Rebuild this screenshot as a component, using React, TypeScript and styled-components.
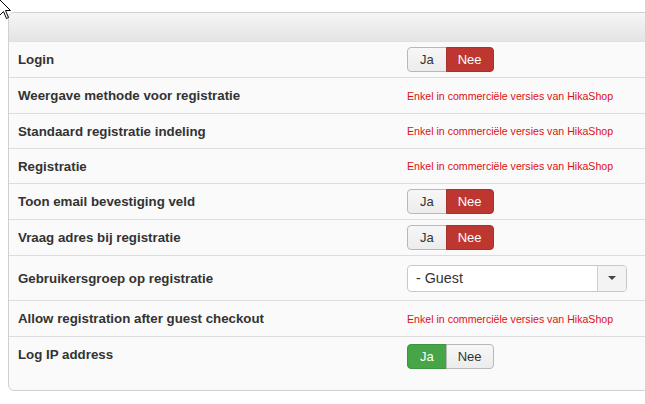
import React from "react";
import styled, { createGlobalStyle } from "styled-components";

const Global = createGlobalStyle`
  html, body { margin: 0; padding: 0; background: #fff; overflow: hidden; }
  body { font-family: "Liberation Sans", Arial, sans-serif; }
`;

const Page = styled.div`
  padding: 12px 0 0 8px;
  width: 645px;
  height: 404px;
  box-sizing: border-box;
  overflow: hidden;
`;

const Panel = styled.div`
  margin-right: -30px;
  border: 1px solid #d0d0d0;
  border-radius: 6px;
  background: #fafafa;
  overflow: hidden;
`;

const Header = styled.div`
  height: 28px;
  background: linear-gradient(#f6f6f6, #e4e4e4);
  border-bottom: 1px solid #e0e0e0;
`;

const Row = styled.div<{ $h: number; $first?: boolean; $top?: boolean }>`
  display: flex;
  align-items: ${(p) => (p.$top ? "flex-start" : "center")};
  height: ${(p) => p.$h}px;
  padding: 0 9px;
  border-top: ${(p) => (p.$first ? "none" : "1px solid #dddddd")};
  box-sizing: content-box;
`;

const Label = styled.div<{ $top?: boolean }>`
  width: 389px;
  flex: none;
  font-weight: bold;
  font-size: 13.3px;
  color: #333;
  ${(p) => (p.$top ? "margin-top: 10px;" : "")}
`;

const Note = styled.div`
  font-size: 10.6px;
  color: #dd1111;
`;

const Group = styled.div<{ $top?: boolean }>`
  display: flex;
  ${(p) => (p.$top ? "margin-top: 7px;" : "")}
`;

const Btn = styled.div<{ $tone?: "red" | "green"; $pos: "l" | "r" }>`
  height: 23px;
  line-height: 23px;
  padding: 0 ${(p) => (p.$pos === "l" ? 12 : 11)}px;
  font-size: 13px;
  border: 1px solid #b8b8b8;
  border-radius: ${(p) => (p.$pos === "l" ? "4px 0 0 4px" : "0 4px 4px 0")};
  ${(p) => (p.$pos === "r" ? "margin-left: -1px;" : "")}
  color: #333;
  background: linear-gradient(#f7f7f7, #ececec);
  ${(p) =>
    p.$tone === "red"
      ? "background: #bd362f; border-color: #a8312a; color: #fff;"
      : p.$tone === "green"
      ? "background: #46a546; border-color: #3e933e; color: #fff;"
      : ""}
`;

const Select = styled.div`
  display: flex;
  width: 218px;
  height: 25px;
  border: 1px solid #c8c8c8;
  border-radius: 4px;
  background: #fff;
  overflow: hidden;
`;

const SelectText = styled.div`
  flex: 1;
  padding-left: 8px;
  line-height: 25px;
  font-size: 14.3px;
  color: #333;
`;

const Arrow = styled.div`
  width: 28px;
  border-left: 1px solid #d0d0d0;
  background: #f3f3f3;
  display: flex;
  align-items: center;
  justify-content: center;
`;

const Caret = styled.div`
  width: 0;
  height: 0;
  border-left: 4px solid transparent;
  border-right: 4px solid transparent;
  border-top: 4px solid #444;
`;

const Cursor = styled.svg`
  position: absolute;
  left: -1px;
  top: -1px;
`;

const Toggle = ({ on, top }: { on: boolean; top?: boolean }) => (
  <Group $top={top}>
    <Btn $pos="l" $tone={on ? "green" : undefined}>Ja</Btn>
    <Btn $pos="r" $tone={on ? undefined : "red"}>Nee</Btn>
  </Group>
);

const NOTE = "Enkel in commerciële versies van HikaShop";

export default function App() {
  return (
    <>
      <Global />
      <Page>
        <Panel>
          <Header />
          <Row $h={35} $first>
            <Label>Login</Label>
            <Toggle on={false} />
          </Row>
          <Row $h={35}>
            <Label>Weergave methode voor registratie</Label>
            <Note>{NOTE}</Note>
          </Row>
          <Row $h={34}>
            <Label>Standaard registratie indeling</Label>
            <Note>{NOTE}</Note>
          </Row>
          <Row $h={34}>
            <Label>Registratie</Label>
            <Note>{NOTE}</Note>
          </Row>
          <Row $h={35}>
            <Label>Toon email bevestiging veld</Label>
            <Toggle on={false} />
          </Row>
          <Row $h={35}>
            <Label>Vraag adres bij registratie</Label>
            <Toggle on={false} />
          </Row>
          <Row $h={44}>
            <Label>Gebruikersgroep op registratie</Label>
            <Select>
              <SelectText>- Guest</SelectText>
              <Arrow>
                <Caret />
              </Arrow>
            </Select>
          </Row>
          <Row $h={35}>
            <Label>Allow registration after guest checkout</Label>
            <Note>{NOTE}</Note>
          </Row>
          <Row $h={53} $top>
            <Label $top>Log IP address</Label>
            <Toggle on top />
          </Row>
        </Panel>
      </Page>
      <Cursor width="20" height="22" viewBox="0 0 20 22">
        <path
          d="M0.5 0.5 L0.5 16.5 L4.5 12.5 L7.5 19.5 L9.5 18.5 L6.5 11.5 L11.5 11.5 Z"
          fill="#fff"
          stroke="#000"
          strokeWidth="1"
        />
      </Cursor>
    </>
  );
}
